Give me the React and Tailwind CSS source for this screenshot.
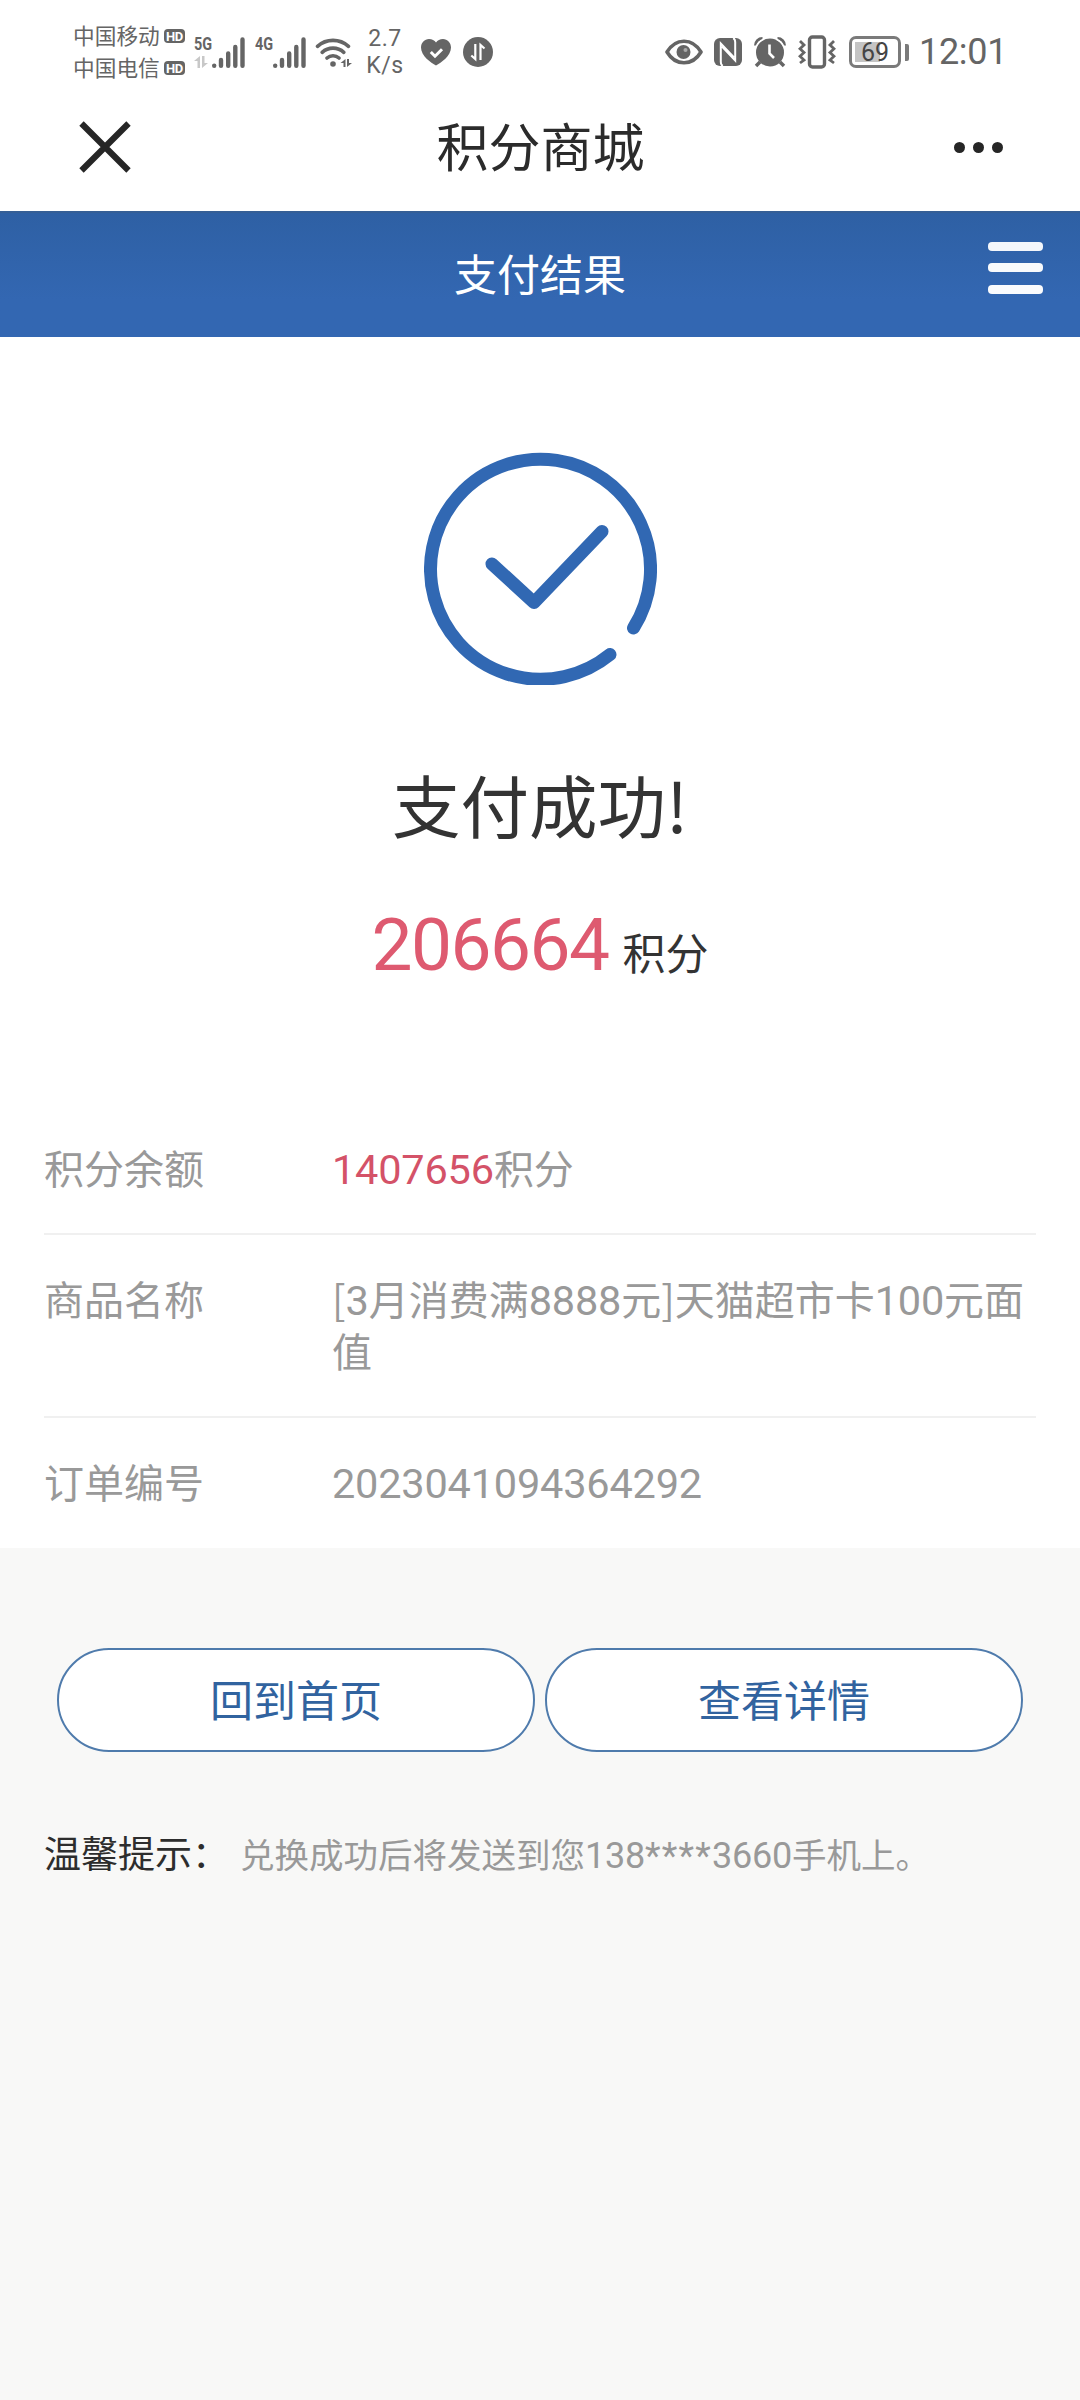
function Signal() {
  return (
    <svg width="33" height="31" viewBox="0 0 33 31" stroke="#656565" strokeWidth="4.400" strokeLinecap="round">
      <path d="M2.200 28.600v.2M9 23v5.800M16.200 16.500v12.300M23.300 10v18.800M30.500 2.500v26.300" />
    </svg>
  );
}

function HdBadge() {
  return (
    <span className="flex h-[14px] w-[21px] items-center justify-center rounded-[4px] bg-[#656565] text-[13px] leading-none font-bold tracking-tight text-white font-['Roboto',sans-serif]">
      HD
    </span>
  );
}

function StatusBar() {
  return (
    <div className="flex h-[104px] items-center pl-[73px] text-[#656565]">
      <div className="flex w-[112px] flex-col text-[21.7px]">
        <div className="flex h-8 items-center justify-between leading-8 whitespace-nowrap">
          <span className="-mt-[2px]">中国移动</span>
          <HdBadge />
        </div>
        <div className="flex h-8 items-center justify-between leading-8 whitespace-nowrap">
          <span className="-mt-[2px]">中国电信</span>
          <HdBadge />
        </div>
      </div>
      <div className="ml-[9px] flex h-[31px] w-[18px] flex-col justify-between text-[19px] leading-[14px] font-bold font-['Roboto',sans-serif]">
        <span className="origin-left scale-x-[0.76]">5G</span>
        <svg width="14" height="12" viewBox="0 0 14 12" fill="#c8c8c8">
          <path d="M6 0v12H3.500V5H0zM8 0h2.500v7H14L8 12z" />
        </svg>
      </div>
      <Signal />
      <div className="ml-[10px] h-[31px] w-[18px] text-[19px] leading-[14px] font-bold font-['Roboto',sans-serif]">
        <span className="inline-block origin-left scale-x-[0.76]">4G</span>
      </div>
      <Signal />
      <svg className="ml-[9px]" width="38" height="31" viewBox="0 0 38 31" fill="none" stroke="#656565" strokeWidth="3.600" strokeLinecap="round">
        <path d="M2.500 9.400a23 23 0 0 1 31 0M7.200 15.300a16 16 0 0 1 21.600 0M12 21a9 9 0 0 1 12 0" />
        <circle cx="18" cy="27" r="2.800" fill="#656565" stroke="none" />
        <path d="M30.500 22v8h-2v-4h-3zM32 22h2v4h3l-5 4z" fill="#656565" stroke="none" />
      </svg>
      <div className="ml-[14px] flex w-[36px] flex-col items-center text-[23px] leading-[27px] tracking-[0.600px] font-['Roboto',sans-serif]">
        <span>2.7</span>
        <span>K/s</span>
      </div>
      <svg className="ml-[18px]" width="30" height="27" viewBox="0 0 30 27">
        <path d="M15 26.500C10 24 0 17 0 8.600C0 3.500 3.600 0 8 0C11 0 13.500 1.300 15 3.500C16.500 1.300 19 0 22 0C26.400 0 30 3.500 30 8.600C30 17 20 24 15 26.500Z" fill="#656565" />
        <path d="M9.800 13l4.200 4.200 7-7" fill="none" stroke="#fff" strokeWidth="3" />
      </svg>
      <svg className="ml-[12px]" width="30" height="30" viewBox="0 0 30 30">
        <circle cx="15" cy="15" r="15" fill="#656565" />
        <path d="M12.300 7v15l-4-3.500M17.500 23V8l4 3.500" fill="none" stroke="#fff" strokeWidth="2.200" />
      </svg>
      <svg className="ml-[172px]" width="38" height="26" viewBox="0 0 38 26">
        <path d="M2 13C6.500 5.500 12 2.200 19 2.200S31.500 5.500 36 13C31.500 20.500 26 23.800 19 23.800S6.500 20.500 2 13Z" fill="none" stroke="#656565" strokeWidth="3.600" strokeLinejoin="round" />
        <circle cx="18.500" cy="13" r="7" fill="#656565" />
        <circle cx="20.500" cy="11" r="2" fill="#aaa" />
      </svg>
      <svg className="ml-[11px]" width="28" height="28" viewBox="0 0 28 28">
        <rect width="28" height="28" rx="6" fill="#656565" />
        <path d="M8.800 28c-1.500-.8-2-2-2-4V5.500L20 19.500M19.200 0c1.500.8 2 2 2 4v18.500L8 8.500" fill="none" stroke="#fff" strokeWidth="2" />
      </svg>
      <svg className="ml-[12px]" width="32" height="31" viewBox="0 0 32 31">
        <circle cx="16" cy="15.500" r="14" fill="#656565" />
        <path d="M1.500 8.500c0-4 3-7 7-7M30.500 8.500c0-4-3-7-7-7" fill="none" stroke="#656565" strokeWidth="3" />
        <path d="M2 10C3.500 6 6.500 3.500 10 2M30 10C28.500 6 25.500 3.500 22 2" fill="none" stroke="#fff" strokeWidth="1.500" />
        <path d="M6 25l-4 4M26 25l4 4" stroke="#656565" strokeWidth="3.500" />
        <path d="M15.500 7.500v9l4.500 4.500" fill="none" stroke="#fff" strokeWidth="2.600" />
      </svg>
      <svg className="ml-[12px]" width="38" height="34" viewBox="0 0 38 34" fill="none" stroke="#656565">
        <rect x="11.500" y="2" width="15" height="30" rx="3" strokeWidth="3.400" />
        <path d="M2 6l4 4-4 3.800 4 3.700-4 3.700 4 3.800-4 3M36 6l-4 4 4 3.800-4 3.700 4 3.700-4 3.800 4 3" strokeWidth="2.800" />
      </svg>
      <div className="ml-[13px] flex h-[32px] w-[52px] rounded-[7px] border-[3px] border-[#7a7a7a] p-[3px]">
        <div className="flex w-full items-center justify-center bg-linear-to-r from-[#c4c4c4] from-62% to-white to-62% text-[25px] leading-none text-[#444] font-['Roboto',sans-serif]">69</div>
      </div>
      <div className="ml-[4px] h-[17px] w-[4px] rounded-r-[2px] bg-[#7a7a7a]" />
      <div className="ml-[10px] text-[36px] leading-none tracking-[-0.300px] whitespace-nowrap font-['Roboto',sans-serif]">12:01</div>
    </div>
  );
}

function TitleBar() {
  return (
    <div className="flex h-[107px] items-center justify-between pr-[77px] pb-[21px] pl-[79px]">
      <svg width="52" height="52" viewBox="0 0 52 52" stroke="#262626" strokeWidth="6.200">
        <path d="M2.500 2.500l47 47M49.500 2.500l-47 47" />
      </svg>
      <h1 className="mr-[4px] mb-[4px] text-[52px] leading-[60px] text-[#2b2b2b]">积分商城</h1>
      <div className="flex w-[49px] justify-between">
        <i className="size-[11px] rounded-full bg-[#262626]" />
        <i className="size-[11px] rounded-full bg-[#262626]" />
        <i className="size-[11px] rounded-full bg-[#262626]" />
      </div>
    </div>
  );
}

function PageHeader() {
  return (
    <div className="flex h-[126px] items-center border-t-2 border-[#355f96] bg-linear-to-b from-[#2e60a4] to-[#3367b2] to-70%">
      <div className="w-[92px]" />
      <h2 className="mb-[7px] flex-1 text-center text-[43px] leading-[50px] text-white">支付结果</h2>
      <button className="mr-[37px] mb-[15px] flex w-[55px] flex-col gap-[12.500px]" aria-label="菜单">
        <i className="h-[9px] w-full rounded-[4px] bg-[#f4f7fb]" />
        <i className="h-[9px] w-full rounded-[4px] bg-[#f8fafc]" />
        <i className="h-[9px] w-full rounded-[4px] bg-[#fafbfd]" />
      </button>
    </div>
  );
}

function Row({ label, last, children }) {
  return (
    <div className={last ? "flex pt-[37px]" : "flex border-b-2 border-[#f0f0f0] pt-[37px] pb-[40px]"}>
      <div className="w-[288px] shrink-0">{label}</div>
      <div className="-mr-2 flex-1">{children}</div>
    </div>
  );
}

function Num({ children, className = "" }) {
  return <span className={`text-[41.500px] leading-none tracking-[-0.200px] font-['Roboto',sans-serif] ${className}`}>{children}</span>;
}

export default function App() {
  return (
    <div className="h-[2400px] w-[1080px] overflow-hidden bg-[#f8f8f7] font-['Noto_Sans_CJK_SC',sans-serif]">
      <div className="h-[1548px] bg-white">
        <StatusBar />
        <TitleBar />
        <PageHeader />
        <div className="flex flex-col items-center pt-[115px]">
          <svg width="233" height="233" viewBox="0 0 233 233" fill="none" stroke="#3168b3" strokeWidth="13" strokeLinecap="round">
            <path d="M209.500 176A110 110 0 1 0 186 202.500" />
            <path d="M68 112L110 150.500L178 79.500" strokeLinejoin="round" />
          </svg>
          <p className="mt-[74px] text-[68.500px] leading-[90px] text-[#333]">支付成功!</p>
          <p className="mt-[51px] flex items-baseline leading-[90px]">
            <span className="text-[73px] tracking-[-1.500px] text-[#de5a70] font-['Roboto',sans-serif]">206664</span>
            <span className="ml-[14px] text-[43px] text-[#333]">积分</span>
          </p>
        </div>
        <div className="mx-[44px] mt-[108px] text-[40px] leading-[52px] text-[#999]">
          <Row label="积分余额">
            <Num className="text-[#d45268]">1407656</Num>积分
          </Row>
          <Row label="商品名称">
            [<Num>3</Num>月消费满<Num>8888</Num>元]天猫超市卡<Num>100</Num>元面值
          </Row>
          <Row label="订单编号" last>
            <Num>2023041094364292</Num>
          </Row>
        </div>
      </div>
      <div className="flex justify-center gap-[10px] pt-[100px]">
        <button className="h-[104px] w-[478px] rounded-full border-2 border-[#4f7bac] bg-white pb-[4px] text-[43px] text-[#31639f]">回到首页</button>
        <button className="h-[104px] w-[478px] rounded-full border-2 border-[#4f7bac] bg-white pb-[4px] text-[43px] text-[#31639f]">查看详情</button>
      </div>
      <p className="mt-[74px] flex items-baseline pl-[44px] leading-[52px] whitespace-nowrap">
        <span className="w-[196px] text-[37px] text-[#2d2d2d]">温馨提示：</span>
        <span className="text-[34.500px] text-[#999]">
          兑换成功后将发送到您<span className="text-[36px] leading-none tracking-[-0.200px] font-['Roboto',sans-serif]">138<span className="tracking-[1.200px]">****</span>3660</span>手机上。
        </span>
      </p>
    </div>
  );
}
